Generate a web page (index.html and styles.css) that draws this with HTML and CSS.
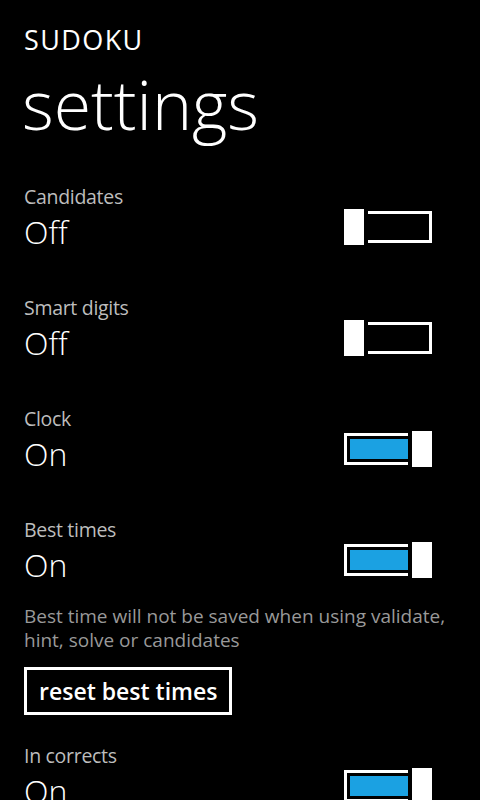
FILE: index.html
```html
<!DOCTYPE html>
<html lang="en">
<head>
<meta charset="utf-8">
<title>Sudoku settings</title>
<link rel="stylesheet" href="styles.css">
</head>
<body>
<div class="page">
  <header class="header">
    <div class="app-title">SUDOKU</div>
    <h1 class="page-title">settings</h1>
  </header>
  <main class="settings">
    <div class="row">
      <div class="texts">
        <div class="label">Candidates</div>
        <div class="value">Off</div>
      </div>
      <div class="switch">
        <div class="track"></div>
        <div class="thumb"></div>
      </div>
    </div>
    <div class="row">
      <div class="texts">
        <div class="label">Smart digits</div>
        <div class="value">Off</div>
      </div>
      <div class="switch">
        <div class="track"></div>
        <div class="thumb"></div>
      </div>
    </div>
    <div class="row">
      <div class="texts">
        <div class="label">Clock</div>
        <div class="value">On</div>
      </div>
      <div class="switch on">
        <div class="track"><div class="fill"></div></div>
        <div class="thumb"></div>
      </div>
    </div>
    <div class="row">
      <div class="texts">
        <div class="label">Best times</div>
        <div class="value">On</div>
      </div>
      <div class="switch on">
        <div class="track"><div class="fill"></div></div>
        <div class="thumb"></div>
      </div>
    </div>
    <p class="note">Best time will not be saved when using validate,<br>hint, solve or candidates</p>
    <button class="btn" type="button">reset best times</button>
    <div class="row last">
      <div class="texts">
        <div class="label">In corrects</div>
        <div class="value">On</div>
      </div>
      <div class="switch on">
        <div class="track"><div class="fill"></div></div>
        <div class="thumb"></div>
      </div>
    </div>
  </main>
</div>
</body>
</html>
```
FILE: styles.css
```css
html, body {
  margin: 0;
  padding: 0;
  background: #000;
}
body {
  color: #fff;
  font-family: "Open Sans", "Noto Sans", "DejaVu Sans", sans-serif;
  height: 800px;
  overflow: hidden;
}
.page {
  padding: 24px 48px 0 24px;
}
.app-title {
  font-size: 27px;
  line-height: 32px;
  font-weight: 400;
  letter-spacing: 1.4px;
}
.page-title {
  margin: 8px 0 0 -2px;
  font-size: 68px;
  line-height: 80px;
  font-weight: 300;
}
.settings {
  padding-top: 39px;
}
.row {
  display: flex;
  justify-content: space-between;
  align-items: flex-end;
  height: 68px;
}
.row + .row {
  margin-top: 43px;
}
.texts {
  display: flex;
  flex-direction: column;
}
.label {
  font-size: 19.5px;
  line-height: 28px;
  letter-spacing: -0.3px;
  color: #bdbdbd;
}
.value {
  padding-top: 2px;
  font-size: 32px;
  line-height: 38px;
  font-weight: 300;
}
.switch {
  position: relative;
  width: 88px;
  height: 36px;
  margin-bottom: 6px;
}
.track {
  position: absolute;
  left: 0;
  right: 0;
  top: 2px;
  height: 32px;
  box-sizing: border-box;
  border: 3px solid #fff;
  padding: 3px;
}
.fill {
  height: 100%;
  background: #1ba1e2;
}
.thumb {
  position: absolute;
  top: 0;
  left: 0;
  width: 20px;
  height: 36px;
  background: #fff;
  box-shadow: 0 0 0 4px #000;
}
.switch.on .thumb {
  left: auto;
  right: 0;
}
.note {
  margin: 20px -40px 0 0;
  font-size: 19px;
  line-height: 24px;
  color: #999;
}
.btn {
  display: block;
  margin-top: 15px;
  height: 48px;
  box-sizing: border-box;
  border: 3px solid #fff;
  background: #000;
  color: #fff;
  font-family: inherit;
  font-size: 23px;
  font-weight: 600;
  line-height: 42px;
  padding: 0 12px;
}
.row.last {
  margin-top: 27px;
}
```
